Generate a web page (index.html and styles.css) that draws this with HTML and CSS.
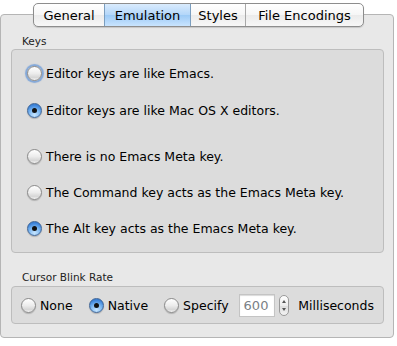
FILE: index.html
```html
<!DOCTYPE html>
<html lang="en">
<head>
    <meta charset="UTF-8">
    <meta name="viewport" content="width=device-width, initial-scale=1.0">
    <title>Preferences</title>
    <link rel="stylesheet" href="styles.css">
</head>
<body>

    <div class="tabs">
        <div class="tab">General</div>
        <div class="tab selected">Emulation</div>
        <div class="tab">Styles</div>
        <div class="tab">File Encodings</div>
    </div>

    <div class="panel">
        <p class="group-label">Keys</p>
        <div class="box keys">
            <div class="option-group">
                <label class="option"><span class="radio focus"></span>Editor keys are like Emacs.</label>
                <label class="option"><span class="radio on"></span>Editor keys are like Mac OS X editors.</label>
            </div>
            <div class="option-group second">
                <label class="option"><span class="radio"></span>There is no Emacs Meta key.</label>
                <label class="option"><span class="radio"></span>The Command key acts as the Emacs Meta key.</label>
                <label class="option"><span class="radio on"></span>The Alt key acts as the Emacs Meta key.</label>
            </div>
        </div>

        <p class="group-label blink-label">Cursor Blink Rate</p>
        <div class="box blink">
            <label class="inline"><span class="radio"></span>None</label>
            <label class="inline"><span class="radio on"></span>Native</label>
            <label class="inline"><span class="radio"></span>Specify</label>
            <div class="number">600</div>
            <div class="stepper">
                <span class="arrow up"></span>
                <span class="arrow down"></span>
            </div>
            <span class="unit">Milliseconds</span>
        </div>
    </div>

</body>
</html>
```
FILE: styles.css
```css
body {
    margin: 0;
    padding-top: 3px;
    background: #fff;
    font-family: "DejaVu Sans", "Lucida Grande", sans-serif;
    font-size: 12.5px;
    color: #000;
}
.tabs {
    position: relative;
    z-index: 1;
    display: flex;
    width: fit-content;
    height: 22px;
    margin: 0 0 -13px 33px;
    border: 1px solid #8d8d8d;
    border-radius: 5px;
    overflow: hidden;
    background: linear-gradient(#ffffff, #f6f6f6 50%, #ebebeb 51%, #f7f7f7);
    box-shadow: 0 1px 1px rgba(0, 0, 0, 0.15);
    font-size: 13px;
}
.tab {
    display: flex;
    align-items: center;
    justify-content: center;
    border-left: 1px solid #a8a8a8;
}
.tab:first-child {
    border-left: none;
}
.tab:nth-child(1) { width: 70px; }
.tab:nth-child(2) { width: 85px; }
.tab:nth-child(3) { width: 54px; }
.tab:nth-child(4) { width: 117px; }
.tab.selected {
    background: linear-gradient(#d9ebfd, #b3d6f9 50%, #9ccaf6 51%, #c9e4fe);
    border-left-color: #7b9ebf;
}
.tab.selected + .tab {
    border-left-color: #7b9ebf;
}
.panel {
    width: 392px;
    height: 322px;
    box-sizing: content-box;
    border: 1px solid #b5b5b5;
    border-radius: 4px;
    background: #e8e8e8;
}
.group-label {
    margin: 20px 0 1px 21px;
    font-size: 10.5px;
    line-height: 13px;
    color: #222;
}
.blink-label {
    margin-top: 18px;
    margin-bottom: 2px;
}
.box {
    margin-left: 10px;
    width: 371px;
    border: 1px solid #bdbdbd;
    border-radius: 4px;
    background: #dcdcdc;
}
.keys {
    padding: 5px 0 6px 15px;
    width: 356px;
}
.option-group.second {
    margin-top: 9px;
}
.option {
    display: flex;
    align-items: center;
    gap: 4px;
    height: 37px;
}
.option-group.second .option {
    height: 36px;
}
.radio {
    display: flex;
    align-items: center;
    justify-content: center;
    flex: none;
    width: 13px;
    height: 13px;
    border: 1px solid #8a8a8a;
    border-radius: 50%;
    background: linear-gradient(#ffffff, #ececec 50%, #d6d6d6 80%, #f4f4f4);
    box-shadow: 0 1px 1px rgba(0, 0, 0, 0.2);
}
.radio.focus {
    box-shadow: 0 0 1px 2px rgba(100, 150, 215, 0.75);
}
.radio.on {
    border-color: #3f6596;
    background: radial-gradient(circle at 50% 85%, #c8e6ff, #7bb6f0 45%, #3f86dc 75%, #2d6cc0);
}
.radio.on::after {
    content: "";
    width: 5px;
    height: 5px;
    border-radius: 50%;
    background: #111;
}
.blink {
    display: flex;
    align-items: center;
    height: 36px;
    padding: 0 9px;
    width: 353px;
}
.inline {
    display: flex;
    align-items: center;
    gap: 4px;
    margin-right: 16px;
}
.inline:nth-child(3) {
    margin-right: 10px;
}
.number {
    width: 31px;
    height: 21px;
    padding-left: 4px;
    line-height: 21px;
    border: 1px solid #c4c4c4;
    background: #fff;
    color: #7a7f86;
    font-size: 13px;
    box-shadow: inset 0 1px 1px rgba(0, 0, 0, 0.15);
}
.stepper {
    display: flex;
    flex-direction: column;
    align-items: center;
    justify-content: space-between;
    width: 11px;
    height: 21px;
    margin-left: 4px;
    padding: 4px 0;
    box-sizing: border-box;
    border: 1px solid #9a9a9a;
    border-radius: 5px;
    background: linear-gradient(#ffffff, #ececec 50%, #dcdcdc 51%, #f3f3f3);
}
.arrow {
    width: 0;
    height: 0;
    border-left: 2px solid transparent;
    border-right: 2px solid transparent;
}
.arrow.up {
    border-bottom: 3px solid #555;
}
.arrow.down {
    border-top: 3px solid #555;
}
.unit {
    margin-left: 9px;
}
```
